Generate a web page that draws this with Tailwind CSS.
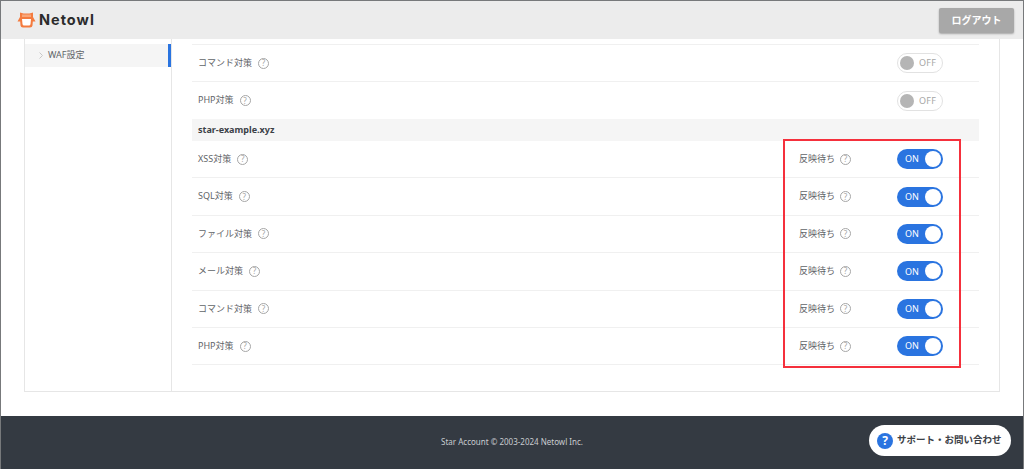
<!doctype html>
<html lang="ja">
<head>
<meta charset="UTF-8" />
<title>Netowl WAF設定</title>
<script src="https://cdn.jsdelivr.net/npm/@tailwindcss/browser@4"></script>
</head>
<body class="h-[469px] w-[1024px] overflow-hidden bg-white font-['Noto_Sans','Noto_Sans_CJK_JP',sans-serif] text-[#5f6468]">
<div class="relative flex h-[469px] flex-col border-x border-t border-[#77797b]">
  <!-- header -->
  <header class="flex h-[38px] shrink-0 items-center justify-between bg-[#ececec] pl-[16px] pr-[9px]">
    <div class="flex items-center gap-[3px]">
      <svg width="19" height="18" viewBox="0 0 19 18">
        <path d="M3 1.500 L6.500 2.500 L12.500 2.500 L16 1.500 L16 6 L18.500 10.500 L15.800 10.500 L15.500 14.500 Q15.300 16.500 13 16.500 L6 16.500 Q3.700 16.500 3.500 14.500 L3.200 10.500 L0.500 10.500 L3 6 Z" fill="#f47b3e"/>
        <path d="M5 8 L14 8 L13.500 13 Q13.300 14.500 12 14.500 L7 14.500 Q5.700 14.500 5.500 13 Z" fill="#fff"/>
        <path d="M5 3.500 L14 3.500 L14 6 L5 6 Z" fill="#f9a678"/>
      </svg>
      <span class="font-['Inter',sans-serif] text-[14.500px] font-bold tracking-[1px] text-[#2b2b2b]">Netowl</span>
    </div>
    <button class="flex h-[25px] w-[75px] items-center justify-center rounded-[2px] bg-[#a8a8a8] text-[10px] font-bold text-white shadow-[0_1px_2px_rgba(0,0,0,0.3)]">ログアウト</button>
  </header>

  <!-- card -->
  <main class="mx-[23px] flex h-[353px] shrink-0 border-x border-b border-[#e6e6e6]">
    <aside class="w-[147px] shrink-0 border-r border-[#e6e6e6] pt-[5px]">
      <div class="flex h-[23px] items-center justify-between bg-[#f5f5f5]">
        <div class="flex items-center pl-[14px]">
          <svg width="4" height="7" viewBox="0 0 4 7" class="mr-[5px]"><path d="M0.500 0.500 L3.500 3.500 L0.500 6.500" fill="none" stroke="#c8c8c8" stroke-width="1"/></svg>
          <span class="pb-[1px] text-[9px]">WAF設定</span>
        </div>
        <div class="h-[23px] w-[3px] bg-[#2a74e0]"></div>
      </div>
    </aside>
    <section class="flex-1 pl-[20px] pr-[20px] pt-[5px]">
      <div class="border-t border-[#f0f0f0]">
        <div class="flex h-[37px] items-center border-b border-[#f0f0f0] pl-[6px] pr-[36px]">
          <span class="pb-[1px] text-[9px]">コマンド対策</span>
          <span class="ml-[6px] flex h-[11px] w-[11px] items-center justify-center rounded-full border border-[#a6a6a6] text-[8px] leading-none text-[#a6a6a6]">?</span>
          <span class="ml-auto flex h-[20px] w-[46px] items-center rounded-full border border-[#e2e2e2] pl-[2px]">
            <span class="h-[14px] w-[14px] rounded-full bg-[#b5b5b5]"></span>
            <span class="ml-[5px] text-[9px] tracking-[0.3px] text-[#a6a6a6]">OFF</span>
          </span>
        </div>
        <div class="flex h-[37px] items-center pl-[6px] pr-[36px]">
          <span class="pb-[1px] text-[9px]">PHP対策</span>
          <span class="ml-[6px] flex h-[11px] w-[11px] items-center justify-center rounded-full border border-[#a6a6a6] text-[8px] leading-none text-[#a6a6a6]">?</span>
          <span class="ml-auto flex h-[20px] w-[46px] items-center rounded-full border border-[#e2e2e2] pl-[2px]">
            <span class="h-[14px] w-[14px] rounded-full bg-[#b5b5b5]"></span>
            <span class="ml-[5px] text-[9px] tracking-[0.3px] text-[#a6a6a6]">OFF</span>
          </span>
        </div>
        <div class="flex h-[22px] items-center bg-[#f5f5f5] pl-[6px] text-[9px] font-bold text-[#3c4147]">star-example.xyz</div>

        <div class="flex h-[37.400px] items-center border-b border-[#f0f0f0] pl-[6px] pr-[36px]">
          <span class="pb-[1px] text-[9px]">XSS対策</span>
          <span class="ml-[6px] flex h-[11px] w-[11px] items-center justify-center rounded-full border border-[#a6a6a6] text-[8px] leading-none text-[#a6a6a6]">?</span>
          <span class="ml-auto pb-[1px] text-[9px]">反映待ち</span>
          <span class="ml-[5px] mr-[46px] flex h-[11px] w-[11px] items-center justify-center rounded-full border border-[#a6a6a6] text-[8px] leading-none text-[#a6a6a6]">?</span>
          <span class="flex h-[20px] w-[46px] items-center justify-between rounded-full bg-[#2a74e0] pl-[8px] pr-[2px]">
            <span class="text-[9px] text-white">ON</span>
            <span class="h-[16px] w-[16px] rounded-full bg-white"></span>
          </span>
        </div>
        <div class="flex h-[37.400px] items-center border-b border-[#f0f0f0] pl-[6px] pr-[36px]">
          <span class="pb-[1px] text-[9px]">SQL対策</span>
          <span class="ml-[6px] flex h-[11px] w-[11px] items-center justify-center rounded-full border border-[#a6a6a6] text-[8px] leading-none text-[#a6a6a6]">?</span>
          <span class="ml-auto pb-[1px] text-[9px]">反映待ち</span>
          <span class="ml-[5px] mr-[46px] flex h-[11px] w-[11px] items-center justify-center rounded-full border border-[#a6a6a6] text-[8px] leading-none text-[#a6a6a6]">?</span>
          <span class="flex h-[20px] w-[46px] items-center justify-between rounded-full bg-[#2a74e0] pl-[8px] pr-[2px]">
            <span class="text-[9px] text-white">ON</span>
            <span class="h-[16px] w-[16px] rounded-full bg-white"></span>
          </span>
        </div>
        <div class="flex h-[37.400px] items-center border-b border-[#f0f0f0] pl-[6px] pr-[36px]">
          <span class="pb-[1px] text-[9px]">ファイル対策</span>
          <span class="ml-[6px] flex h-[11px] w-[11px] items-center justify-center rounded-full border border-[#a6a6a6] text-[8px] leading-none text-[#a6a6a6]">?</span>
          <span class="ml-auto pb-[1px] text-[9px]">反映待ち</span>
          <span class="ml-[5px] mr-[46px] flex h-[11px] w-[11px] items-center justify-center rounded-full border border-[#a6a6a6] text-[8px] leading-none text-[#a6a6a6]">?</span>
          <span class="flex h-[20px] w-[46px] items-center justify-between rounded-full bg-[#2a74e0] pl-[8px] pr-[2px]">
            <span class="text-[9px] text-white">ON</span>
            <span class="h-[16px] w-[16px] rounded-full bg-white"></span>
          </span>
        </div>
        <div class="flex h-[37.400px] items-center border-b border-[#f0f0f0] pl-[6px] pr-[36px]">
          <span class="pb-[1px] text-[9px]">メール対策</span>
          <span class="ml-[6px] flex h-[11px] w-[11px] items-center justify-center rounded-full border border-[#a6a6a6] text-[8px] leading-none text-[#a6a6a6]">?</span>
          <span class="ml-auto pb-[1px] text-[9px]">反映待ち</span>
          <span class="ml-[5px] mr-[46px] flex h-[11px] w-[11px] items-center justify-center rounded-full border border-[#a6a6a6] text-[8px] leading-none text-[#a6a6a6]">?</span>
          <span class="flex h-[20px] w-[46px] items-center justify-between rounded-full bg-[#2a74e0] pl-[8px] pr-[2px]">
            <span class="text-[9px] text-white">ON</span>
            <span class="h-[16px] w-[16px] rounded-full bg-white"></span>
          </span>
        </div>
        <div class="flex h-[37.400px] items-center border-b border-[#f0f0f0] pl-[6px] pr-[36px]">
          <span class="pb-[1px] text-[9px]">コマンド対策</span>
          <span class="ml-[6px] flex h-[11px] w-[11px] items-center justify-center rounded-full border border-[#a6a6a6] text-[8px] leading-none text-[#a6a6a6]">?</span>
          <span class="ml-auto pb-[1px] text-[9px]">反映待ち</span>
          <span class="ml-[5px] mr-[46px] flex h-[11px] w-[11px] items-center justify-center rounded-full border border-[#a6a6a6] text-[8px] leading-none text-[#a6a6a6]">?</span>
          <span class="flex h-[20px] w-[46px] items-center justify-between rounded-full bg-[#2a74e0] pl-[8px] pr-[2px]">
            <span class="text-[9px] text-white">ON</span>
            <span class="h-[16px] w-[16px] rounded-full bg-white"></span>
          </span>
        </div>
        <div class="flex h-[37.400px] items-center border-b border-[#f0f0f0] pl-[6px] pr-[36px]">
          <span class="pb-[1px] text-[9px]">PHP対策</span>
          <span class="ml-[6px] flex h-[11px] w-[11px] items-center justify-center rounded-full border border-[#a6a6a6] text-[8px] leading-none text-[#a6a6a6]">?</span>
          <span class="ml-auto pb-[1px] text-[9px]">反映待ち</span>
          <span class="ml-[5px] mr-[46px] flex h-[11px] w-[11px] items-center justify-center rounded-full border border-[#a6a6a6] text-[8px] leading-none text-[#a6a6a6]">?</span>
          <span class="flex h-[20px] w-[46px] items-center justify-between rounded-full bg-[#2a74e0] pl-[8px] pr-[2px]">
            <span class="text-[9px] text-white">ON</span>
            <span class="h-[16px] w-[16px] rounded-full bg-white"></span>
          </span>
        </div>
      </div>
    </section>
  </main>

  <!-- footer -->
  <footer class="mt-[24px] flex flex-1 items-center justify-center bg-[#343a42] pb-[2px] text-[8px] text-[#c9ccd0]">Star Account © 2003-2024 Netowl Inc.</footer>

  <!-- highlight annotation -->
  <div class="absolute left-[782px] top-[138px] h-[229px] w-[178px] border-2 border-[#f5303c]"></div>

  <!-- support button -->
  <button class="absolute left-[868px] top-[424px] flex h-[31px] w-[142px] items-center rounded-full bg-white pl-[8px] text-[9.500px] font-bold text-[#3c4147]">
    <span class="mr-[4px] flex h-[16px] w-[16px] items-center justify-center rounded-full bg-[#2a74e0] text-[12px] font-bold text-white">?</span>サポート・お問い合わせ
  </button>
</div>
</body>
</html>
